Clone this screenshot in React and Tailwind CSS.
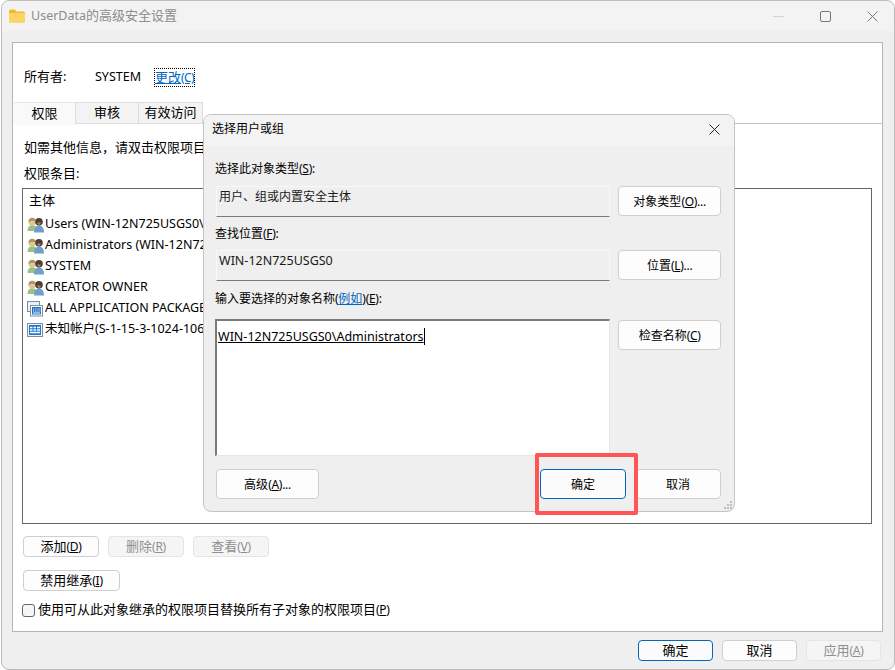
const font = { fontFamily: '"Noto Sans", "Noto Sans CJK SC", sans-serif' }

// accelerator key in parens, Segoe's parens are narrower than Noto's
function Key({ k, tail = '' }) {
  return (
    <span className="text-[12px] tracking-[-0.3px]">
      (<u>{k}</u>){tail}
    </span>
  )
}

function Btn({ children, className = '', primary = false, disabled = false, small = false }) {
  const tone = primary
    ? 'border-[#0067c0] bg-[#fbfbfb] text-black'
    : disabled
      ? 'border-[#e5e5e5] bg-[#f5f5f5] text-[#8f8f8f]'
      : 'border-[#cfcfcf] bg-[#fdfdfd] text-black'
  return (
    <div className={`flex items-center justify-center rounded-[4px] border leading-none ${small ? 'pt-[2px] text-[12px]' : 'text-[13px]'} ${tone} ${className}`}>
      <span className="whitespace-nowrap">{children}</span>
    </div>
  )
}

function UsersIcon() {
  return (
    <svg width="18" height="16" viewBox="0 0 18 16" className="shrink-0">
      <path d="M0.500 14c0-3.800 1.800-5.800 4.800-5.800S10 10.200 10 14z" fill="#9cc07f" />
      <circle cx="5.200" cy="4.800" r="3.800" fill="#e0c596" />
      <path d="M1.600 5C1.600 2 3.200.8 5.200.8S8.800 2 8.800 4.400C7 3.400 4 3.800 1.600 5z" fill="#a8985c" />
      <path d="M7 15.500c0-4.400 2-6.900 5-6.900s5 2.500 5 6.900z" fill="#6f9fcc" />
      <circle cx="12" cy="4.800" r="3.800" fill="#4d3d36" />
      <path d="M10.200 5.500c.3 1.600 1 2.300 1.800 2.300s1.500-.7 1.800-2.300z" fill="#ab8262" />
    </svg>
  )
}

function PackageIcon() {
  return (
    <svg width="16" height="16" viewBox="0 0 16 16" className="mr-[2px] shrink-0">
      <rect x="0.500" y="0.500" width="12" height="10" fill="#e8f0f8" stroke="#7d8ea0" />
      <rect x="3.500" y="4.500" width="12" height="10.500" fill="#fff" stroke="#7d8ea0" />
      <rect x="5" y="6" width="9" height="7.500" fill="#1f6fc4" />
      <path d="M6 8h1.200M8.200 8h1.200M10.400 8h1.200M12.400 8h1M6 10h1.200M8.200 10h1.200M10.400 10h1.200M12.400 10h1M6 12h7" stroke="#fff" strokeWidth="1" />
    </svg>
  )
}

function AccountIcon() {
  return (
    <svg width="16" height="16" viewBox="0 0 16 16" className="mr-[2px] shrink-0">
      <rect x="0.500" y="1.500" width="15" height="13" fill="#f0f4f8" stroke="#7d8ea0" />
      <rect x="2" y="3" width="12" height="10" fill="#1f78d1" />
      <path d="M3 5.500h2.500M6.500 5.500H9M10 5.500h3M3 8h2.500M6.500 8H9M10 8h3M3 10.500h10" stroke="#fff" strokeWidth="1.400" />
    </svg>
  )
}

function FolderIcon() {
  return (
    <svg width="16" height="14" viewBox="0 0 16 14">
      <path d="M0 2a1.500 1.500 0 0 1 1.500-1.500h4L7.500 2.500h7A1.500 1.500 0 0 1 16 4v8a1.500 1.500 0 0 1-1.500 1.500h-13A1.500 1.500 0 0 1 0 12z" fill="#f5b82e" />
      <path d="M0 5a1 1 0 0 1 1-1h14a1 1 0 0 1 1 1v7a1.500 1.500 0 0 1-1.500 1.500h-13A1.500 1.500 0 0 1 0 12z" fill="#fcd462" />
    </svg>
  )
}

// the rest of these names sits behind the dialog in the screenshot
const rows = [
  { icon: <UsersIcon />, text: 'Users (WIN-12N725USGS0\\' },
  { icon: <UsersIcon />, text: 'Administrators (WIN-12N72' },
  { icon: <UsersIcon />, text: 'SYSTEM' },
  { icon: <UsersIcon />, text: 'CREATOR OWNER' },
  { icon: <PackageIcon />, text: 'ALL APPLICATION PACKAGE' },
  { icon: <AccountIcon />, text: '未知帐户(S-1-15-3-1024-106' },
]

function Field({ children }) {
  return (
    <div className="h-[31px] w-[394px] border border-[#f8f8f8] border-b-[#7a7a7a] bg-[#efefef] pl-[2px] pt-[1px] text-[12px] leading-[18px] text-[#1a1a1a]">
      {children}
    </div>
  )
}

function Dialog() {
  return (
    <div className="absolute left-[203px] top-[114px] flex h-[398px] w-[532px] flex-col overflow-hidden rounded-[8px] border border-[#c4c4c4] bg-[#efefef]">
      <div className="flex h-[31px] shrink-0 items-center justify-between bg-[#f3f3f3] pb-[3px] pl-[8px] pr-[14px] text-[12px]">
        <span>选择用户或组</span>
        <svg width="11" height="11" viewBox="0 0 11 11">
          <path d="M.5.500l10 10M10.500.500l-10 10" stroke="#222" strokeWidth="1" />
        </svg>
      </div>
      <div className="relative flex-1 pl-[12px] pr-[13px]">
        <div className="flex">
          <div className="w-[403px]">
            <div className="-ml-px mt-[13px] h-[18px] text-[12px] leading-[20px]">选择此对象类型<Key k="S" />:</div>
            <div className="mt-[9px]"><Field>用户、组或内置安全主体</Field></div>
            <div className="-ml-px mt-[7px] h-[18px] text-[12px] leading-[20px]">查找位置<Key k="F" />:</div>
            <div className="mt-[8px]"><Field><span className="text-[12.5px]">WIN-12N725USGS0</span></Field></div>
            <div className="-ml-px mt-[8px] h-[18px] text-[12px] leading-[20px]">
              输入要选择的对象名称<span className="tracking-[-0.3px]">(</span><u className="text-[#0067c0]">例如</u><span className="tracking-[-0.3px]">)</span><Key k="E" />:
            </div>
            <div className="-ml-px mt-[12px] h-[137px] w-[395px] border border-l-2 border-t-2 border-[#e6e6e6] border-l-[#7a7a7a] border-t-[#7a7a7a] bg-white pl-px pt-[7px] text-[12.5px] leading-[18px]">
              <span className="border-r border-black underline">WIN-12N725USGS0\Administrators</span>
            </div>
          </div>
          <div className="flex w-[103px] flex-col">
            <Btn small className="mt-[40px] h-[30px]">对象类型<Key k="O" tail="..." /></Btn>
            <Btn small className="mt-[34px] h-[30px]">位置<Key k="L" tail="..." /></Btn>
            <Btn small className="mt-[40px] h-[30px]">检查名称<Key k="C" /></Btn>
          </div>
        </div>
        <div className="mt-[13px] flex items-center">
          <Btn small className="h-[30px] w-[103px]">高级<Key k="A" tail="..." /></Btn>
          <Btn small primary className="ml-[221px] h-[30px] w-[86px]">确定</Btn>
          <Btn small className="ml-[9px] h-[30px] w-[86px]">取消</Btn>
        </div>
        <svg width="10" height="10" viewBox="0 0 10 10" className="absolute bottom-[1px] right-[1px]">
          <path d="M7 1h2v2H7zM4 4h2v2H4zM7 4h2v2H7zM1 7h2v2H1zM4 7h2v2H4zM7 7h2v2H7z" fill="#bdbdbd" />
        </svg>
      </div>
    </div>
  )
}

export default function App() {
  return (
    <div className="relative h-[670px] w-[895px] overflow-hidden bg-white text-black" style={font}>
      <div className="ml-px flex h-[670px] w-[894px] flex-col rounded-[8px] border border-[#bcbcbc] bg-[#efefef]">
        <div className="flex h-[30px] shrink-0 items-center justify-between rounded-t-[8px] bg-[#f3f3f3] pl-[7px] pr-[16px]">
          <div className="flex items-center gap-[6px]">
            <FolderIcon />
            <span className="text-[13px] text-[#8c8c8c]"><span className="text-[12.5px]">UserData</span>的高级安全设置</span>
          </div>
          <div className="flex items-center gap-[36px]">
            <div className="h-px w-[11px] bg-[#d4d4d4]" />
            <div className="h-[11px] w-[11px] rounded-[2px] border border-[#777]" />
            <svg width="11" height="11" viewBox="0 0 11 11">
              <path d="M.5.500l10 10M10.500.500l-10 10" stroke="#777" strokeWidth="1" />
            </svg>
          </div>
        </div>

        <div className="ml-[10px] mt-[11px] flex h-[590px] w-[871px] flex-col border border-[#b5b5b5] bg-white">
          <div className="mt-[25px] flex h-[18px] items-center pl-[11px] text-[13px]">
            <span className="w-[71px]">所有者:</span>
            <span className="w-[59px] text-[12.5px]">SYSTEM</span>
            <span className="border border-dotted border-black leading-[16px] text-[#0067c0] underline">更改<span className="text-[12px] tracking-[-0.6px]">(C)</span></span>
          </div>

          <div className="mt-[16px] flex h-[23px] text-[13px]">
            <div className="ml-px flex h-[23px] w-[61px] items-center justify-center border-t border-[#e5e5e5] bg-[#f9f9f9]">权限</div>
            <div className="flex h-[22px] w-[64px] items-center justify-center border border-[#dcdcdc] bg-[#f3f3f3]">审核</div>
            <div className="flex h-[22px] w-[64px] items-center justify-center border-y border-r border-[#dcdcdc] bg-[#f3f3f3]">有效访问</div>
            <div className="h-[22px] flex-1 border-b border-[#c4c4c4]" />
          </div>

          <div className="mt-[13px] h-[18px] whitespace-nowrap pl-[11px] text-[13px] leading-[18px]">如需其他信息，请双击权限项目</div>
          <div className="mt-[8px] h-[18px] pl-[11px] text-[13px] leading-[18px]">权限条目:</div>

          <div className="ml-[9px] mt-[6px] h-[336px] w-[850px] border border-[#666] bg-white pt-[1px]">
            <div className="h-[20px] pl-[6px] text-[13px] leading-[20px]">主体</div>
            <div className="mt-[4px] flex flex-col">
              {rows.map((r) => (
                <div key={r.text} className="flex h-[21px] w-[180px] items-center overflow-hidden whitespace-nowrap pl-[4px] text-[12.5px]">
                  {r.icon}
                  <span>{r.text}</span>
                </div>
              ))}
            </div>
          </div>

          <div className="ml-[10px] mt-[12px] flex gap-[9px]">
            <Btn className="h-[21px] w-[76px]">添加<Key k="D" /></Btn>
            <Btn disabled className="h-[21px] w-[76px]">删除<Key k="R" /></Btn>
            <Btn disabled className="h-[21px] w-[76px]">查看<Key k="V" /></Btn>
          </div>
          <Btn className="ml-[10px] mt-[13px] h-[21px] w-[97px]">禁用继承<Key k="I" /></Btn>
          <div className="ml-[9px] mt-[10px] flex h-[18px] items-center gap-[3px] text-[13px]">
            <div className="h-[13px] w-[13px] rounded-[3px] border border-[#666] bg-[#f6f6f6]" />
            <span>使用可从此对象继承的权限项目替换所有子对象的权限项目<Key k="P" /></span>
          </div>
        </div>

        <div className="mt-[8px] flex justify-end gap-[9px] pr-[13px]">
          <Btn primary className="h-[21px] w-[75px]">确定</Btn>
          <Btn className="h-[21px] w-[75px]">取消</Btn>
          <Btn disabled className="h-[21px] w-[75px]">应用<Key k="A" /></Btn>
        </div>
      </div>

      <Dialog />
      <div className="absolute left-[535px] top-[453px] h-[62px] w-[103px] rounded-[2px] border-[4px] border-[#ff5555]" />
    </div>
  )
}
